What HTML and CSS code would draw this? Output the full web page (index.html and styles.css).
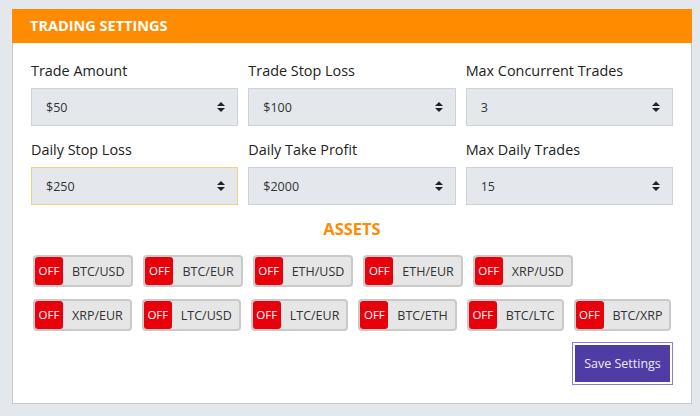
FILE: index.html
```html
<!DOCTYPE html>
<html lang="en">
<head>
  <meta charset="UTF-8">
  <title>Trading Settings</title>
  <link rel="stylesheet" href="styles.css">
</head>
<body>
  <div class="panel">
    <div class="panel-header">TRADING SETTINGS</div>
    <div class="panel-body">
      <div class="fields">
        <div class="field">
          <label>Trade Amount</label>
          <div class="select-wrap">
            <select><option>$50</option></select>
            <svg class="caret" width="8" height="10" viewBox="0 0 8 10"><path d="M0 4L4 0L8 4Z M0 6L4 10L8 6Z" fill="#222"/></svg>
          </div>
        </div>
        <div class="field">
          <label>Trade Stop Loss</label>
          <div class="select-wrap">
            <select><option>$100</option></select>
            <svg class="caret" width="8" height="10" viewBox="0 0 8 10"><path d="M0 4L4 0L8 4Z M0 6L4 10L8 6Z" fill="#222"/></svg>
          </div>
        </div>
        <div class="field">
          <label>Max Concurrent Trades</label>
          <div class="select-wrap">
            <select><option>3</option></select>
            <svg class="caret" width="8" height="10" viewBox="0 0 8 10"><path d="M0 4L4 0L8 4Z M0 6L4 10L8 6Z" fill="#222"/></svg>
          </div>
        </div>
        <div class="field">
          <label>Daily Stop Loss</label>
          <div class="select-wrap focused">
            <select><option>$250</option></select>
            <svg class="caret" width="8" height="10" viewBox="0 0 8 10"><path d="M0 4L4 0L8 4Z M0 6L4 10L8 6Z" fill="#222"/></svg>
          </div>
        </div>
        <div class="field">
          <label>Daily Take Profit</label>
          <div class="select-wrap">
            <select><option>$2000</option></select>
            <svg class="caret" width="8" height="10" viewBox="0 0 8 10"><path d="M0 4L4 0L8 4Z M0 6L4 10L8 6Z" fill="#222"/></svg>
          </div>
        </div>
        <div class="field">
          <label>Max Daily Trades</label>
          <div class="select-wrap">
            <select><option>15</option></select>
            <svg class="caret" width="8" height="10" viewBox="0 0 8 10"><path d="M0 4L4 0L8 4Z M0 6L4 10L8 6Z" fill="#222"/></svg>
          </div>
        </div>
      </div>

      <div class="assets-title">ASSETS</div>
      <div class="assets">
        <div class="toggle"><span class="state">OFF</span><span class="pair">BTC/USD</span></div>
        <div class="toggle"><span class="state">OFF</span><span class="pair">BTC/EUR</span></div>
        <div class="toggle"><span class="state">OFF</span><span class="pair">ETH/USD</span></div>
        <div class="toggle"><span class="state">OFF</span><span class="pair">ETH/EUR</span></div>
        <div class="toggle"><span class="state">OFF</span><span class="pair">XRP/USD</span></div>
        <div class="toggle"><span class="state">OFF</span><span class="pair">XRP/EUR</span></div>
        <div class="toggle"><span class="state">OFF</span><span class="pair">LTC/USD</span></div>
        <div class="toggle"><span class="state">OFF</span><span class="pair">LTC/EUR</span></div>
        <div class="toggle"><span class="state">OFF</span><span class="pair">BTC/ETH</span></div>
        <div class="toggle"><span class="state">OFF</span><span class="pair">BTC/LTC</span></div>
        <div class="toggle"><span class="state">OFF</span><span class="pair">BTC/XRP</span></div>
      </div>

      <div class="actions">
        <button class="save-btn">Save Settings</button>
      </div>
    </div>
  </div>
</body>
</html>
```

FILE: styles.css
```css
body {
  margin: 0;
  padding: 9px 0 0 12px;
  background: #e4e8ec;
  font-family: 'Open Sans', sans-serif;
  color: #222;
}

.panel {
  width: 678px;
  background: #fff;
  border: 1px solid #c9c9c9;
  border-top: none;
}

.panel-header {
  margin: 0 -1px;
  background: #ff8c00;
  color: #fff;
  font-weight: bold;
  font-size: 14.5px;
  height: 34px;
  line-height: 34px;
  padding-left: 18px;
}

.panel-body {
  padding: 18px 18px 21px 18px;
}

.fields {
  display: grid;
  grid-template-columns: repeat(3, 1fr);
  column-gap: 10px;
  row-gap: 14px;
}

.field label {
  display: block;
  font-size: 14.4px;
  line-height: 20px;
  margin-bottom: 7px;
}

.select-wrap {
  position: relative;
  height: 38px;
  box-sizing: border-box;
  border: 1px solid #cdd2d8;
  background: #e4e8ec;
}

.select-wrap.focused {
  border-color: #f7cf80;
}

.select-wrap select {
  appearance: none;
  -webkit-appearance: none;
  width: 100%;
  height: 100%;
  border: none;
  background: transparent;
  font-family: 'Open Sans', sans-serif;
  font-size: 12.5px;
  color: #333;
  padding: 0 14px;
  outline: none;
}

.caret {
  position: absolute;
  right: 12px;
  top: 13px;
  pointer-events: none;
}

.assets-title {
  text-align: center;
  color: #ff8c00;
  font-weight: bold;
  font-size: 16.5px;
  line-height: 22px;
  margin: 13px 0 15px;
}

.assets {
  display: flex;
  flex-wrap: wrap;
  gap: 12px 10px;
  padding-left: 2px;
}

.toggle {
  display: flex;
  align-items: center;
  height: 32px;
  box-sizing: border-box;
  border: 2px solid #cacaca;
  border-radius: 4px;
  background: #e6e6e6;
  font-size: 12.5px;
}

.toggle .state {
  width: 28px;
  height: 28px;
  line-height: 28px;
  text-align: center;
  background: #e8000b;
  color: #fff;
  font-size: 11.5px;
  border-radius: 3px;
}

.toggle .pair {
  padding: 0 7px 0 9px;
  color: #333;
}

.actions {
  display: flex;
  justify-content: flex-end;
  padding-top: 14px;
  padding-right: 3px;
}

.save-btn {
  width: 95px;
  height: 37px;
  padding: 0;
  border: none;
  background: #4f3ca5;
  color: #ecebf7;
  font-family: 'Open Sans', sans-serif;
  font-size: 12.5px;
  box-shadow: 0 0 0 2px #fff, 0 0 0 3px #8a7dd3;
  cursor: pointer;
}
```
